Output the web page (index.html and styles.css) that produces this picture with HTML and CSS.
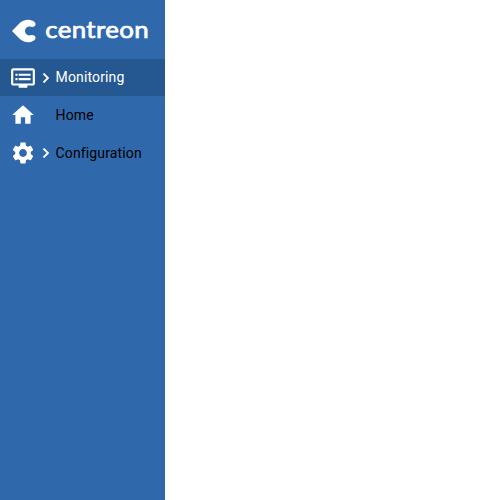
FILE: index.html
```
<!DOCTYPE html>
<html lang="en">
<head>
<meta charset="utf-8">
<title>Centreon</title>
<link rel="stylesheet" href="styles.css">
</head>
<body>
<aside class="sidebar">
  <header class="brand">
    <svg class="logo" width="165" height="59" viewBox="0 0 165 59" role="img" aria-label="centreon">
      <path class="logo-mark" d="M12 31 L19.3 23.4 C24 18.7 31.5 18.7 35 22.6 Q36.4 24.6 34.8 26 Q33.2 27.4 31.6 27 C28.2 25.6 25 27.8 25 31 C25 34.2 28.2 36.4 31.6 35 Q33.2 34.6 34.8 36 Q36.4 37.4 35 39.4 C31.5 43.3 24 43.3 19.3 38.6 Z"/>
      <text class="logo-text" transform="translate(45.3 37.8) scale(1.1 1)" textLength="94" lengthAdjust="spacing">centreon</text>
    </svg>
  </header>
  <nav class="menu">
    <a class="item active">
      <svg class="icon" viewBox="0 0 24 24"><path d="M21 3H3c-1.1 0-2 .9-2 2v12c0 1.1.9 2 2 2h5v2h8v-2h5c1.1 0 1.99-.9 1.99-2L23 5c0-1.1-.9-2-2-2zm0 14H3V5h18v12zm-2-9H8v2h11V8zm0 4H8v2h11v-2zM7 8H5v2h2V8zm0 4H5v2h2v-2z"/></svg>
      <svg class="chevron" viewBox="0 0 24 24"><path d="M10 6 8.59 7.41 13.17 12l-4.58 4.59L10 18l6-6z"/></svg>
      <span class="label">Monitoring</span>
    </a>
    <a class="item">
      <svg class="icon" viewBox="0 0 24 24"><path d="M10 20v-6h4v6h5v-8h3L12 3 2 12h3v8z"/></svg>
      <span class="chevron"></span>
      <span class="label">Home</span>
    </a>
    <a class="item">
      <svg class="icon" viewBox="0 0 24 24"><path d="M19.14 12.94c.04-.3.06-.61.06-.94 0-.32-.02-.64-.07-.94l2.03-1.58c.18-.14.23-.41.12-.61l-1.92-3.32c-.12-.22-.37-.29-.59-.22l-2.39.96c-.5-.38-1.03-.7-1.62-.94l-.36-2.54c-.04-.24-.24-.41-.48-.41h-3.84c-.24 0-.43.17-.47.41l-.36 2.54c-.59.24-1.13.57-1.62.94l-2.39-.96c-.22-.08-.47 0-.59.22L2.74 8.87c-.12.21-.08.47.12.61l2.03 1.58c-.05.3-.09.63-.09.94s.02.64.07.94l-2.03 1.58c-.18.14-.23.41-.12.61l1.92 3.32c.12.22.37.29.59.22l2.39-.96c.5.38 1.03.7 1.62.94l.36 2.54c.05.24.24.41.48.41h3.84c.24 0 .44-.17.47-.41l.36-2.54c.59-.24 1.13-.56 1.62-.94l2.39.96c.22.08.47 0 .59-.22l1.92-3.32c.12-.22.07-.47-.12-.61l-2.01-1.58zM12 15.6c-1.98 0-3.6-1.62-3.6-3.6s1.62-3.6 3.6-3.6 3.6 1.62 3.6 3.6-1.62 3.6-3.6 3.6z"/></svg>
      <svg class="chevron" viewBox="0 0 24 24"><path d="M10 6 8.59 7.41 13.17 12l-4.58 4.59L10 18l6-6z"/></svg>
      <span class="label">Configuration</span>
    </a>
  </nav>
</aside>
</body>
</html>
```
FILE: styles.css
```
body {
  margin: 0;
  background: #fff;
  font-family: Roboto, "Liberation Sans", sans-serif;
}
.sidebar {
  width: 165px;
  height: 100vh;
  background: #2f69ac;
}
.brand {
  height: 59px;
}
.logo {
  display: block;
}
.logo-mark {
  fill: #fff;
}
.logo-text {
  fill: #fff;
  stroke: #fff;
  stroke-width: 0.7px;
  font: 400 23.5px Lato, sans-serif;
}
.menu {
  display: flex;
  flex-direction: column;
}
.item {
  display: flex;
  align-items: center;
  box-sizing: border-box;
  height: 38px;
  padding-left: 10px;
  color: #000;
  font-size: 14px;
}
.active {
  height: 37px;
  background: #255891;
  color: #fff;
}
.icon {
  width: 26px;
  height: 26px;
  fill: #fff;
}
.chevron {
  width: 19.6px;
  height: 20px;
  flex: none;
  fill: #fff;
  stroke: #fff;
  stroke-width: 0.4px;
}
.label {
  padding-bottom: 1px;
  letter-spacing: 0.13px;
}
```
